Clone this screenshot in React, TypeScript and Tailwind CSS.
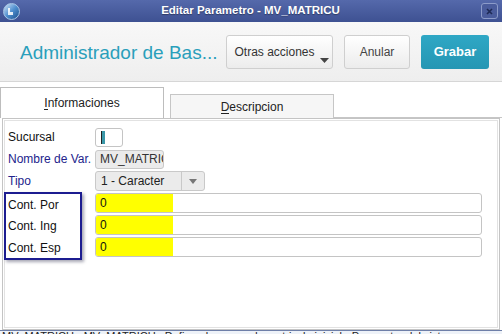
import React from "react";

const labelFont = "font-['Liberation_Sans',Arial,sans-serif]";

const TitleBar: React.FC = () => (
	<div className="h-[22px] flex items-center px-[3px] bg-gradient-to-b from-[#5569ab] to-[#3e5192] relative">
		<div className="w-[17px] h-[17px] rounded-full bg-gradient-to-br from-[#cfe3f5] via-[#4f8fcf] to-[#1c4f8c] border border-[#a9c6e6] flex items-center justify-center">
			<svg width="9" height="9" viewBox="0 0 9 9">
				<path d="M1 1h2v4h3v3H1z" fill="#ffffff" opacity="0.85" />
			</svg>
		</div>
		<div className="flex-1 text-center text-white font-bold text-[11.5px] whitespace-nowrap [text-shadow:0_1px_1px_rgba(0,0,0,0.35)]">
			Editar Parametro - MV_MATRICU
		</div>
		<div className="w-[17px] h-[16px] mr-[1px] rounded-[3px] border border-[#8c9bc9] bg-[#4a5c9c] flex items-center justify-center">
			<svg width="7" height="7" viewBox="0 0 7 7">
				<path d="M1 1l5 5M6 1L1 6" stroke="#1e2a55" strokeWidth="1.6" />
			</svg>
		</div>
	</div>
);

const Header: React.FC = () => (
	<div className="h-[60px] flex items-center bg-gradient-to-b from-[#f8f8f8] to-[#eeeeee] border-b border-[#d6d6d6]">
		<div className="pl-[20px] w-[226px] text-[19px] text-[#2a9fbb] leading-none pt-[2px] whitespace-nowrap">Administrador de Bas...</div>
		<div className="flex gap-[11px] items-center">
			<div className="relative w-[107px] h-[34px] rounded-[3px] border border-[#cfcfcf] bg-gradient-to-b from-[#ffffff] to-[#ececec] flex items-center justify-center text-[12px] text-[#333]">
				<span className="pr-[10px]">Otras acciones</span>
				<svg className="absolute right-[3px] bottom-[5px]" width="9" height="5" viewBox="0 0 9 5">
					<path d="M0 0h9L4.5 5z" fill="#444" />
				</svg>
			</div>
			<div className="w-[66px] h-[34px] rounded-[3px] border border-[#cfcfcf] bg-gradient-to-b from-[#ffffff] to-[#ececec] flex items-center justify-center text-[12px] text-[#444]">
				Anular
			</div>
			<div className="w-[68px] h-[34px] rounded-[3px] bg-gradient-to-b from-[#2fa7c5] to-[#2596b3] flex items-center justify-center text-[13px] font-bold text-white">
				Grabar
			</div>
		</div>
	</div>
);

const Row: React.FC<{ label?: string; blue?: boolean; children: React.ReactNode }> = ({ label, blue, children }) => (
	<div className="flex items-center h-[22px]">
		<div className={`w-[87px] text-[12px] whitespace-nowrap ${blue ? "text-[#23238c]" : "text-[#111]"}`}>{label}</div>
		{children}
	</div>
);

const YellowInput: React.FC = () => (
	<div className="h-[20px] w-[387px] rounded-[3px] border border-[#c4c4c4] bg-white flex items-center overflow-hidden">
		<div className="h-full w-[77px] bg-[#ffff00] text-[12px] text-[#111] pl-[4px] flex items-center">0</div>
	</div>
);

export default function App() {
	return (
		<div className={`w-[502px] h-[334px] overflow-hidden bg-white flex flex-col ${labelFont}`}>
			<TitleBar />
			<Header />
			<div className="flex-1 flex flex-col pt-[5px]">
				<div className="flex items-end h-[31px]">
					<div className="w-[164px] h-[31px] border border-b-0 border-[#bdbdbd] bg-white flex items-center justify-center text-[12px] text-[#222] pb-[1px]">
						<span><u className="no-underline border-b border-[#222] leading-[11px] inline-block">I</u>nformaciones</span>
					</div>
					<div className="w-[164px] h-[24px] ml-[6px] border border-b-0 border-[#c6c6c6] bg-[#f6f6f6] flex items-center justify-center text-[12px] text-[#222]">
						<span><u className="no-underline border-b border-[#222] leading-[11px] inline-block">D</u>escripcion</span>
					</div>
					<div className="flex-1 border-b border-[#c6c6c6]" />
				</div>
				<div className="flex-1 mx-[2px] border border-[#c4c4c4] p-[1px]">
					<div className="h-full border border-[#e2e2e2] pt-[5px] pl-[3px]">
						<Row label="Sucursal">
							<div className="w-[28px] h-[19px] rounded-[3px] border border-[#c4c4c4] bg-white flex items-center pl-[5px]">
								<div className="w-[4px] h-[13px] bg-[#3a97a8] border-l border-[#222]" />
							</div>
						</Row>
						<Row label="Nombre de Var." blue>
							<div className="w-[69px] h-[19px] rounded-[3px] border border-[#c9c9c9] bg-[#ebebeb] text-[12px] text-[#333] pl-[4px] flex items-center overflow-hidden whitespace-nowrap">
								MV_MATRICI
							</div>
						</Row>
						<Row label="Tipo" blue>
							<div className="w-[110px] h-[20px] rounded-[3px] border border-[#c9c9c9] bg-[#ebebeb] flex items-center text-[12px] text-[#222]">
								<div className="flex-1 pl-[5px]">1 - Caracter</div>
								<div className="w-[23px] h-full border-l border-[#c9c9c9] flex items-center justify-center">
									<svg width="8" height="5" viewBox="0 0 8 5">
										<path d="M0 0h8L4 5z" fill="#777" />
									</svg>
								</div>
							</div>
						</Row>
						<div className="flex">
							<div className="w-[78px] -ml-[4px] border-2 border-[#1c1c90] shadow-[2px_2px_3px_rgba(0,0,40,0.35)] flex flex-col text-[12px] text-[#111] pl-[2px]">
								<div className="h-[21px] flex items-center">Cont. Por</div>
								<div className="h-[22px] flex items-center">Cont. Ing</div>
								<div className="h-[21px] flex items-center">Cont. Esp</div>
							</div>
							<div className="ml-[13px] flex flex-col">
								<div className="h-[22px] flex items-center"><YellowInput /></div>
								<div className="h-[22px] flex items-center"><YellowInput /></div>
								<div className="h-[22px] flex items-center"><YellowInput /></div>
							</div>
						</div>
					</div>
				</div>
				<div className="h-[4px] shrink-0 overflow-hidden bg-[#eef2f8] border-t border-[#6e7fa8]">
					<div className="text-[11px] leading-[11px] text-[#222] pl-[2px] whitespace-nowrap">
						MV_MATRICU - MV_MATRICU : Define el numero de matricula inicial · Parametro del sistema
					</div>
				</div>
			</div>
		</div>
	);
}
